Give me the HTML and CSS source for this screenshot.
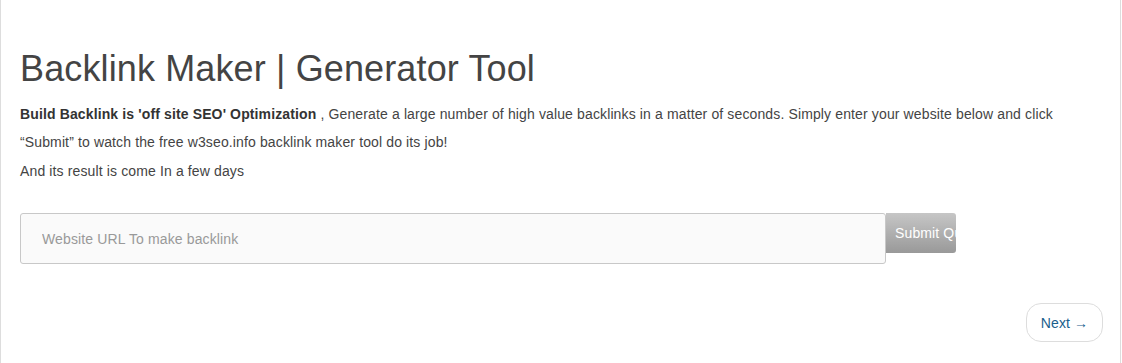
FILE: index.html
```html
<!DOCTYPE html>
<html>
<head>
<meta charset="utf-8">
<link rel="stylesheet" href="styles.css">
</head>
<body>
<div class="panel">
  <h1 class="title">Backlink Maker | Generator Tool</h1>
  <p class="intro"><b>Build Backlink is 'off site SEO' Optimization</b> , Generate a large number of high value backlinks in a matter of seconds. Simply enter your website below and click “Submit” to watch the free w3seo.info backlink maker tool do its job!<br>And its result is come In a few days</p>
  <form class="url-form">
    <input class="url-input" type="text" placeholder="Website URL To make backlink">
    <button class="submit-btn" type="button">Submit Query</button>
  </form>
  <div class="pager">
    <a class="next-btn" href="#">Next →</a>
  </div>
</div>
</body>
</html>
```

FILE: styles.css
```css
html, body {
  margin: 0;
  padding: 0;
  background: #fff;
}
body {
  font-family: "Liberation Sans", Arial, sans-serif;
  color: #444;
  letter-spacing: 0.13px;
}
.panel {
  width: 1121px;
  min-height: 363px;
  border-left: 1px solid #ddd;
  border-right: 1px solid #ddd;
  padding: 49px 0 0 19px;
  box-sizing: border-box;
}
.title {
  margin: 0 0 11px;
  font-size: 36px;
  font-weight: normal;
  line-height: 1.1;
  color: #444;
}
.intro {
  margin: 0;
  font-size: 14px;
  line-height: 28.5px;
  color: #444;
  width: 1070px;
}
.intro b {
  color: #333;
}
.url-form {
  display: flex;
  align-items: flex-start;
  margin-top: 28px;
}
.url-input {
  width: 866px;
  height: 51px;
  box-sizing: border-box;
  border: 1px solid #c8c8c8;
  border-radius: 3px;
  background: #fafafa;
  padding: 0 21px;
  font-family: "Liberation Sans", Arial, sans-serif;
  font-size: 14px;
  letter-spacing: 0.13px;
  color: #444;
  outline: none;
}
.url-input::placeholder {
  color: #999;
}
.submit-btn {
  width: 70px;
  height: 40px;
  box-sizing: border-box;
  border: none;
  border-radius: 0 3px 3px 0;
  background: linear-gradient(#c6c6c6, #999);
  color: #fff;
  font-family: "Liberation Sans", Arial, sans-serif;
  font-size: 14px;
  letter-spacing: 0.13px;
  padding: 0 0 0 9px;
  text-align: left;
  white-space: nowrap;
  overflow: hidden;
}
.pager {
  display: flex;
  justify-content: flex-end;
  margin-top: 39px;
  padding-right: 17px;
}
.next-btn {
  display: inline-flex;
  align-items: center;
  justify-content: center;
  width: 77px;
  height: 39px;
  box-sizing: border-box;
  border: 1px solid #ddd;
  border-radius: 15px;
  color: #1a5e8c;
  text-decoration: none;
  font-size: 14px;
  background: #fff;
}
```
